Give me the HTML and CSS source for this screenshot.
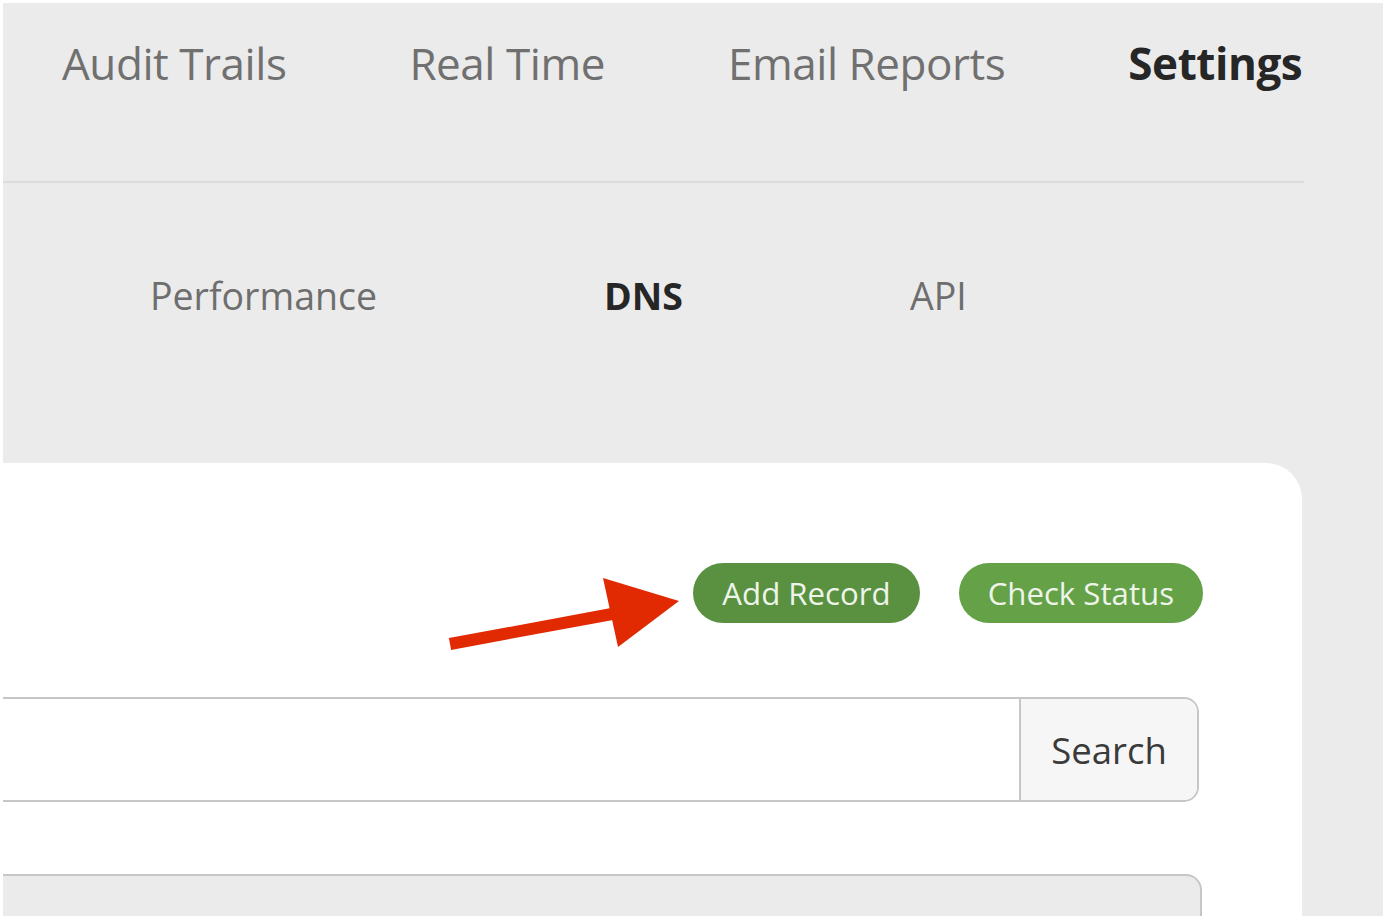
FILE: index.html
```html
<!DOCTYPE html>
<html lang="en">
<head>
<meta charset="utf-8">
<title>DNS Settings</title>
<link rel="stylesheet" href="styles.css">
</head>
<body>
<div class="frame">
  <nav class="topnav">
    <a class="topnav-item">Audit Trails</a>
    <a class="topnav-item">Real Time</a>
    <a class="topnav-item">Email Reports</a>
    <a class="topnav-item active">Settings</a>
  </nav>
  <nav class="subnav">
    <a class="subnav-item">Performance</a>
    <a class="subnav-item active">DNS</a>
    <a class="subnav-item">API</a>
  </nav>
  <section class="card">
    <div class="actions">
      <button class="btn btn-dark">Add Record</button>
      <button class="btn btn-light">Check Status</button>
    </div>
    <svg class="arrow" width="250" height="85" viewBox="0 0 250 85">
      <polygon fill="#e12a02" points="8.9,68.1 11.1,79.9 173.1,49.9 170.9,38.1"/>
      <polygon fill="#e12a02" points="163,8 239,31 178,77"/>
    </svg>
    <div class="search">
      <input class="search-input" type="text">
      <button class="search-btn">Search</button>
    </div>
    <div class="panel"></div>
  </section>
</div>
</body>
</html>
```
FILE: styles.css
```css
html, body {
  margin: 0;
  padding: 0;
  background: #ffffff;
}
body {
  font-family: "Open Sans", "Liberation Sans", sans-serif;
  height: 918px;
  overflow: hidden;
}
.frame {
  margin: 3px 1px 0 3px;
  height: 913px;
  background: #ebebeb;
  overflow: hidden;
  position: relative;
}
.topnav {
  display: flex;
  align-items: flex-start;
  gap: 123px;
  padding: 30px 0 0 59px;
  height: 148px;
  margin-right: 79px;
  border-bottom: 2px solid #dcdcdc;
}
.topnav-item {
  font-size: 44px;
  letter-spacing: -0.45px;
  color: #707070;
  white-space: nowrap;
}
.topnav-item.active {
  font-weight: 700;
  color: #262626;
}
.subnav {
  display: flex;
  gap: 227px;
  padding: 87px 0 0 147px;
  height: 193px;
  box-sizing: border-box;
}
.subnav-item {
  font-size: 37.5px;
  color: #6e6e6e;
  white-space: nowrap;
}
.subnav-item.active {
  font-weight: 700;
  color: #262626;
}
.card {
  position: relative;
  margin-left: -40px;
  width: 1339px;
  margin-top: 87px;
  height: 500px;
  background: #ffffff;
  border-radius: 36px 36px 0 0;
  box-sizing: border-box;
  padding-top: 100px;
}
.actions {
  display: flex;
  justify-content: flex-end;
  gap: 39px;
  padding-right: 99px;
}
.btn {
  height: 60px;
  border: none;
  border-radius: 30px;
  padding: 0 29px;
  font-family: "Open Sans", "Liberation Sans", sans-serif;
  font-size: 31.2px;
  color: #eef4ea;
  display: flex;
  align-items: center;
}
.btn-dark {
  background: #5a9140;
}
.btn-light {
  background: #64a147;
}
.arrow {
  position: absolute;
  left: 477px;
  top: 107px;
}
.search {
  display: flex;
  margin-top: 74px;
  margin-right: 103px;
  height: 105px;
  border: 2px solid #c6c6c6;
  border-radius: 0 15px 15px 0;
  box-sizing: border-box;
  overflow: hidden;
}
.search-input {
  flex: 1;
  border: none;
  outline: none;
  background: #ffffff;
}
.search-btn {
  width: 178px;
  border: none;
  border-left: 2px solid #c6c6c6;
  background: #f6f6f6;
  font-family: "Open Sans", "Liberation Sans", sans-serif;
  font-size: 36.5px;
  color: #3a3a3a;
  padding: 0;
}
.panel {
  margin-top: 72px;
  margin-right: 100px;
  height: 200px;
  background: #ebebeb;
  border: 2px solid #c6c6c6;
  border-left: none;
  border-radius: 0 16px 0 0;
}
```
